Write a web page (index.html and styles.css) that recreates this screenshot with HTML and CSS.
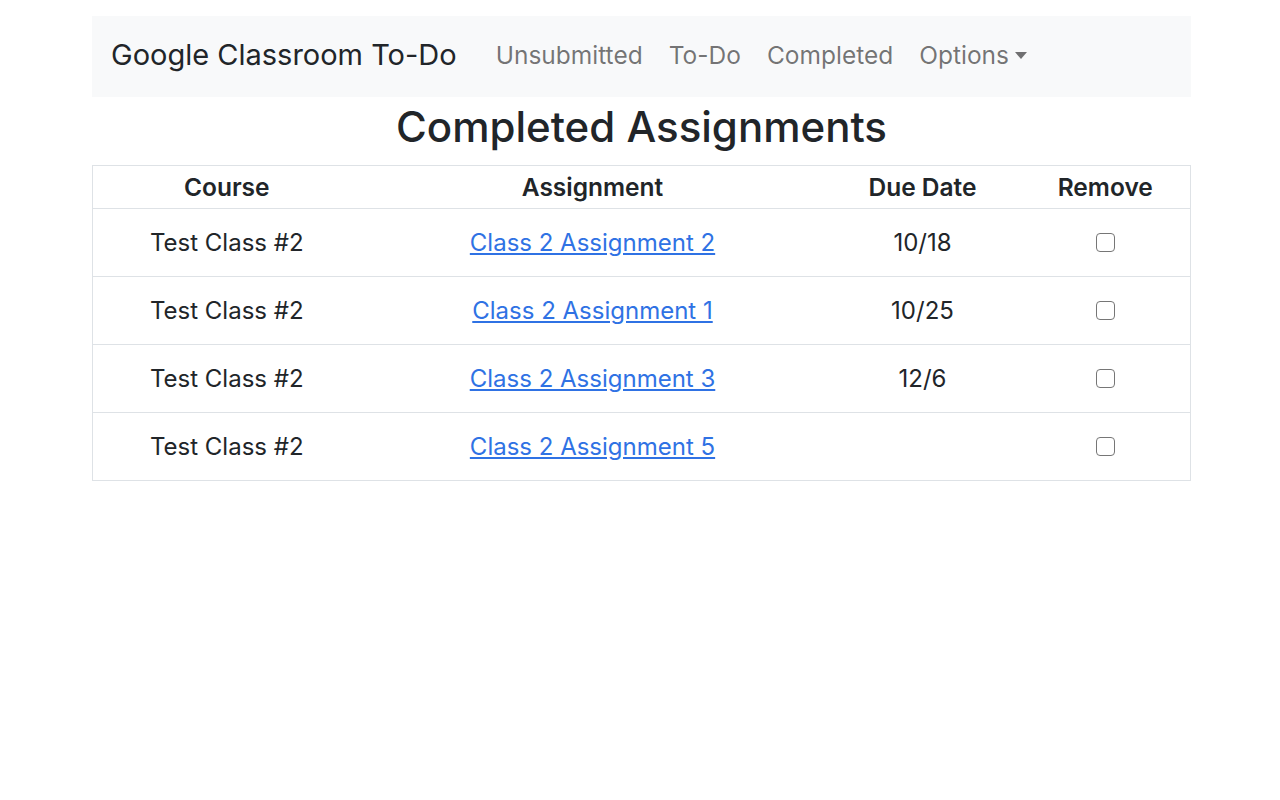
FILE: index.html
```html
<!DOCTYPE html>
<html lang="en">
<head>
  <meta charset="UTF-8" />
  <meta name="viewport" content="width=device-width, initial-scale=1.0"/>
  <title>Google Classroom To-Do</title>
  <link rel="stylesheet" href="styles.css">
</head>
<body>
  <div class="container">
    <nav class="navbar">
      <a class="brand" href="#">Google Classroom To-Do</a>
      <ul class="nav-links">
        <li><a href="#">Unsubmitted</a></li>
        <li><a href="#">To-Do</a></li>
        <li><a href="#">Completed</a></li>
        <li><a href="#" class="dropdown-toggle">Options</a></li>
      </ul>
    </nav>

    <h1>Completed Assignments</h1>

    <table class="assignments">
      <thead>
        <tr>
          <th class="col-course">Course</th>
          <th class="col-assignment">Assignment</th>
          <th class="col-due">Due Date</th>
          <th class="col-remove">Remove</th>
        </tr>
      </thead>
      <tbody>
        <tr>
          <td>Test Class #2</td>
          <td><a href="#">Class 2 Assignment 2</a></td>
          <td>10/18</td>
          <td><input type="checkbox" class="check" /></td>
        </tr>
        <tr>
          <td>Test Class #2</td>
          <td><a href="#">Class 2 Assignment 1</a></td>
          <td>10/25</td>
          <td><input type="checkbox" class="check" /></td>
        </tr>
        <tr>
          <td>Test Class #2</td>
          <td><a href="#">Class 2 Assignment 3</a></td>
          <td>12/6</td>
          <td><input type="checkbox" class="check" /></td>
        </tr>
        <tr>
          <td>Test Class #2</td>
          <td><a href="#">Class 2 Assignment 5</a></td>
          <td></td>
          <td><input type="checkbox" class="check" /></td>
        </tr>
      </tbody>
    </table>
  </div>
</body>
</html>
```

FILE: styles.css
```css
:root {
  --text-color: #212529;
  --nav-bg: #f8f9fa;
  --nav-link: rgba(0, 0, 0, 0.55);
  --border-color: #dee2e6;
  --link-color: #2f72e4;
}

* {
  margin: 0;
  padding: 0;
  box-sizing: border-box;
}

body {
  font-family: Inter, "Noto Sans", sans-serif;
  color: var(--text-color);
  background: white;
}

.container {
  width: 1099px;
  margin-left: 92px;
  padding-top: 16px;
}

.navbar {
  display: flex;
  align-items: center;
  height: 81px;
  padding: 0 19px 4px;
  background-color: var(--nav-bg);
}

.brand {
  font-size: 29px;
  color: var(--text-color);
  text-decoration: none;
  margin-right: 26px;
}

.nav-links {
  display: flex;
  list-style: none;
}

.nav-links a {
  display: block;
  padding: 0 13px;
  font-size: 24.5px;
  color: var(--nav-link);
  text-decoration: none;
}

.dropdown-toggle::after {
  content: "";
  display: inline-block;
  margin-left: 6px;
  vertical-align: 5px;
  border-top: 7px solid;
  border-left: 6.5px solid transparent;
  border-right: 6.5px solid transparent;
}

h1 {
  margin: 6px 0 14px;
  text-align: center;
  font-size: 42px;
  font-weight: 500;
  line-height: 48px;
}

.assignments {
  width: 100%;
  border-collapse: collapse;
  border: 1px solid var(--border-color);
  table-layout: fixed;
}

.assignments th,
.assignments td {
  text-align: center;
  border-bottom: 1px solid var(--border-color);
}

.assignments th {
  height: 43px;
  font-size: 24.5px;
  font-weight: 600;
}

.assignments td {
  height: 68px;
  font-size: 24px;
}

.col-course { width: 268px; }
.col-assignment { width: 464px; }
.col-due { width: 196px; }

.assignments a {
  color: var(--link-color);
}

.check {
  appearance: none;
  width: 19px;
  height: 19px;
  border: 1px solid #767676;
  border-radius: 4px;
  background: white;
  vertical-align: middle;
  position: relative;
  top: -2px;
}
```
